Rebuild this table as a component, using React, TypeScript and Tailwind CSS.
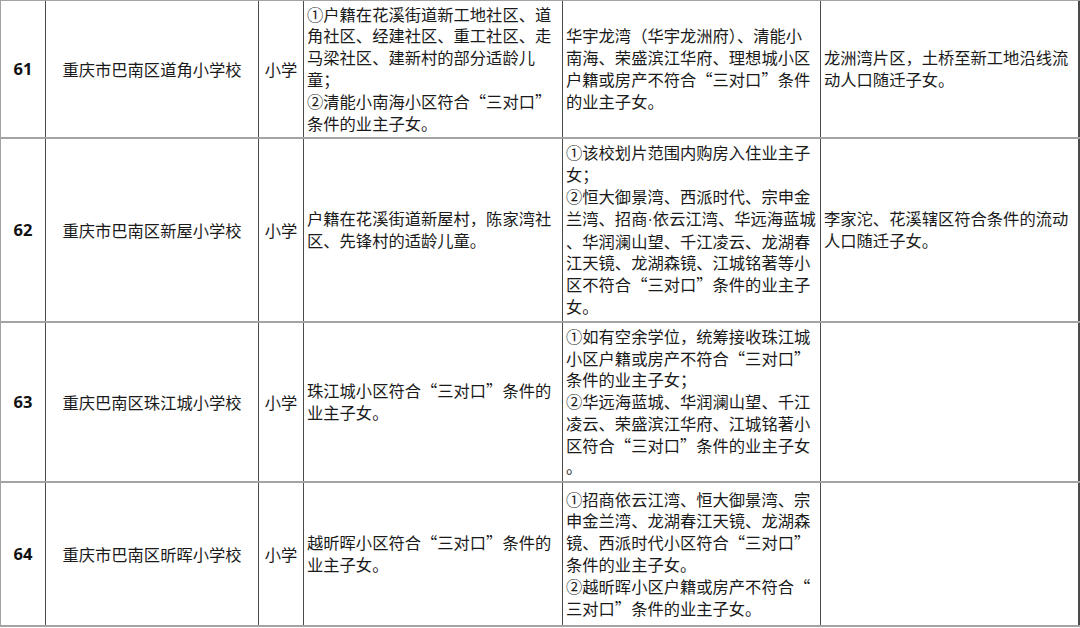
const ROWS = [
  {
    no: "61",
    h: "h-[138px]",
    school: "重庆市巴南区道角小学校",
    c4: [
      "①户籍在花溪街道新工地社区、道",
      "角社区、经建社区、重工社区、走",
      "马梁社区、建新村的部分适龄儿",
      "童；",
      "②清能小南海小区符合“三对口”",
      "条件的业主子女。",
    ],
    c5: [
      "华宇龙湾（华宇龙洲府）、清能小",
      "南海、荣盛滨江华府、理想城小区",
      "户籍或房产不符合“三对口”条件",
      "的业主子女。",
    ],
    c6: ["龙洲湾片区，土桥至新工地沿线流", "动人口随迁子女。"],
  },
  {
    no: "62",
    h: "h-[184px]",
    school: "重庆市巴南区新屋小学校",
    c4: ["户籍在花溪街道新屋村，陈家湾社", "区、先锋村的适龄儿童。"],
    c5: [
      "①该校划片范围内购房入住业主子",
      "女；",
      "②恒大御景湾、西派时代、宗申金",
      "兰湾、招商|·|依云江湾、华远海蓝城",
      "、华润澜山望、千江凌云、龙湖春",
      "江天镜、龙湖森镜、江城铭著等小",
      "区不符合“三对口”条件的业主子",
      "女。",
    ],
    c6: ["李家沱、花溪辖区符合条件的流动", "人口随迁子女。"],
  },
  {
    no: "63",
    h: "h-[160px]",
    school: "重庆巴南区珠江城小学校",
    c4: ["珠江城小区符合“三对口”条件的", "业主子女。"],
    c5: [
      "①如有空余学位，统筹接收珠江城",
      "小区户籍或房产不符合“三对口”",
      "条件的业主子女；",
      "②华远海蓝城、华润澜山望、千江",
      "凌云、荣盛滨江华府、江城铭著小",
      "区符合“三对口”条件的业主子女",
      "。",
    ],
    c6: [],
  },
  {
    no: "64",
    h: "h-[144px]",
    school: "重庆市巴南区昕晖小学校",
    c4: ["越昕晖小区符合“三对口”条件的", "业主子女。"],
    c5: [
      "①招商依云江湾、恒大御景湾、宗",
      "申金兰湾、龙湖春江天镜、龙湖森",
      "镜、西派时代小区符合“三对口”",
      "条件的业主子女。",
      "②越昕晖小区户籍或房产不符合“",
      "三对口”条件的业主子女。",
    ],
    c6: [],
  },
];

// a "|·|" marks a narrow middle dot, set in a latin face
function Line({ text }: { text: string }) {
  const parts = text.split("|·|");
  if (parts.length === 1) return <div>{text}</div>;
  return (
    <div>
      {parts[0]}
      <span className="font-['Liberation_Sans',sans-serif]">·</span>
      {parts[1]}
    </div>
  );
}

function Lines({ lines }: { lines: string[] }) {
  return (
    <div className="whitespace-nowrap leading-[21.8px]">
      {lines.map((l, i) => (
        <Line key={i} text={l} />
      ))}
    </div>
  );
}

export default function App() {
  return (
    <div className="w-[1080px] h-[628px] bg-white overflow-hidden text-[16.3px] text-[#1a1a1a] font-['Noto_Sans_CJK_SC',sans-serif]">
      <div className="border-t border-l border-[#a3a3a3] w-[1080px]">
        {ROWS.map((r) => (
          <div key={r.no} className={`flex ${r.h} border-b-2 border-[#a3a3a3]`}>
            <div className="w-[45px] shrink-0 flex items-center justify-center border-r border-[#4a4a4a] font-['Open_Sans',sans-serif] font-bold text-[16.5px] text-[#111]">
              {r.no}
            </div>
            <div className="w-[213px] shrink-0 flex items-center justify-center border-r border-[#4a4a4a]">
              {r.school}
            </div>
            <div className="w-[45px] shrink-0 flex items-center justify-center border-r border-[#4a4a4a]">
              小学
            </div>
            <div className="w-[259px] shrink-0 overflow-hidden flex items-center pl-[3px] border-r border-[#4a4a4a]">
              <Lines lines={r.c4} />
            </div>
            <div className="w-[258px] shrink-0 overflow-hidden flex items-center pl-[3px] border-r border-[#4a4a4a]">
              <Lines lines={r.c5} />
            </div>
            <div className="w-[259px] shrink-0 overflow-hidden flex items-center pl-[3px] border-r-2 border-[#4a4a4a]">
              <Lines lines={r.c6} />
            </div>
          </div>
        ))}
      </div>
    </div>
  );
}
